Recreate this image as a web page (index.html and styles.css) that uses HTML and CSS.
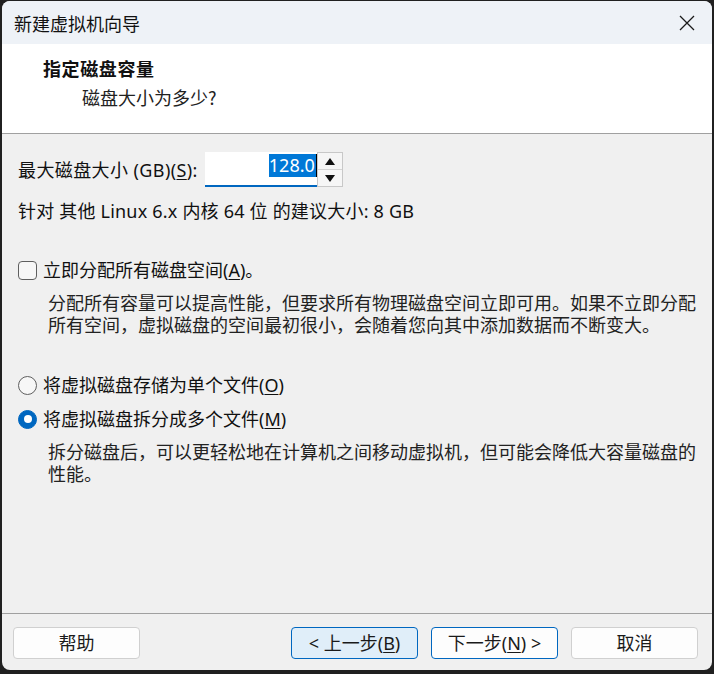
FILE: index.html
```html
<!DOCTYPE html>
<html lang="zh-CN">
<head>
<meta charset="utf-8">
<title>新建虚拟机向导</title>
<link rel="stylesheet" href="styles.css">
</head>
<body>
<div class="window">
  <div class="titlebar">
    <span class="title">新建虚拟机向导</span>
    <span class="close">
      <svg width="16" height="16" viewBox="0 0 16 16"><path d="M1 1 L15 15 M15 1 L1 15" stroke="#1a1a1a" stroke-width="1.3" fill="none"/></svg>
    </span>
  </div>
  <div class="header">
    <div class="h-title">指定磁盘容量</div>
    <div class="h-sub">磁盘大小为多少?</div>
  </div>
  <div class="content">
    <div class="size-row">
      <span class="label">最大磁盘大小 (GB)(<u>S</u>):</span>
      <div class="spin">
        <div class="spin-input"><span class="sel">128.0</span></div>
        <div class="spin-btns">
          <span class="spin-btn"><svg width="10" height="7" viewBox="0 0 10 7"><path d="M0 7 L5 0 L10 7 Z" fill="#111"/></svg></span>
          <span class="spin-btn"><svg width="10" height="7" viewBox="0 0 10 7"><path d="M0 0 L10 0 L5 7 Z" fill="#111"/></svg></span>
        </div>
      </div>
    </div>
    <div class="hint">针对 其他 Linux 6.x 内核 64 位 的建议大小: 8 GB</div>

    <div class="opt opt-check">
      <span class="checkbox"></span>
      <span class="label">立即分配所有磁盘空间(<u>A</u>)。</span>
    </div>
    <p class="desc">分配所有容量可以提高性能，但要求所有物理磁盘空间立即可用。如果不立即分配<br>所有空间，虚拟磁盘的空间最初很小，会随着您向其中添加数据而不断变大。</p>

    <div class="opt opt-radio1">
      <span class="radio"></span>
      <span class="label">将虚拟磁盘存储为单个文件(<u>O</u>)</span>
    </div>
    <div class="opt opt-radio2">
      <span class="radio checked"></span>
      <span class="label">将虚拟磁盘拆分成多个文件(<u>M</u>)</span>
    </div>
    <p class="desc">拆分磁盘后，可以更轻松地在计算机之间移动虚拟机，但可能会降低大容量磁盘的<br>性能。</p>
  </div>
  <div class="footer">
    <button class="btn">帮助</button>
    <span class="spacer"></span>
    <button class="btn btn-back">&lt; 上一步(<u>B</u>)</button>
    <button class="btn btn-next">下一步(<u>N</u>) &gt;</button>
    <button class="btn">取消</button>
  </div>
</div>
</body>
</html>
```

FILE: styles.css
```css
* { box-sizing: border-box; }
html, body { margin: 0; padding: 0; }
body {
  background: #202020;
  width: 714px;
  height: 674px;
  overflow: hidden;
  font-family: "Noto Sans", "Noto Sans CJK SC", sans-serif;
  font-size: 18px;
  color: #111;
}
.window {
  margin: 1px 0 0 2px;
  width: 710px;
  height: 669px;
  border-radius: 8px;
  overflow: hidden;
  background: #f0f0f0;
  display: flex;
  flex-direction: column;
}
.titlebar {
  height: 43px;
  background: #eef2f7;
  display: flex;
  align-items: center;
  justify-content: space-between;
  padding: 0 17px 0 12px;
}
.title {
  font-family: "Noto Sans CJK SC", sans-serif;
  font-size: 18px;
  line-height: 24px;
  color: #111;
}
.close { display: flex; width: 16px; height: 16px; }
.header {
  background: #ffffff;
  padding: 12px 0 24px 41px;
  border-bottom: 1px solid #a0a0a0;
}
.h-title {
  font-family: "Noto Sans CJK SC", sans-serif;
  font-weight: bold;
  font-size: 18px;
  line-height: 24px;
  letter-spacing: 0.6px;
}
.h-sub {
  font-family: "Noto Sans CJK SC", sans-serif;
  font-size: 18px;
  line-height: 24px;
  margin: 5px 0 0 39px;
  color: #222;
}
.content {
  flex: 1;
  padding: 0 16px;
}
.label { line-height: 24px; }
u { text-underline-offset: 2px; }
.size-row {
  margin-top: 18px;
  height: 35px;
  display: flex;
  align-items: center;
}
.size-row .label { margin-right: 7px; letter-spacing: 0.4px; }
.spin { display: flex; height: 35px; }
.spin-input {
  width: 112px;
  height: 35px;
  background: #fff;
  border-bottom: 2px solid #0067c0;
  display: flex;
  justify-content: flex-end;
  align-items: flex-start;
  padding-top: 2px;
}
.sel {
  background: #0078d7;
  color: #fff;
  line-height: 23px;
  padding: 0 1px 0 0;
  border-right: 1px solid #000;
}
.spin-btns {
  width: 26px;
  display: flex;
  flex-direction: column;
  border: 1px solid #c8c8c8;
  background: #f6f6f6;
}
.spin-btn {
  flex: 1;
  display: flex;
  align-items: center;
  justify-content: center;
}
.spin-btn + .spin-btn { border-top: 1px solid #d4d4d4; }
.hint { margin-top: 12px; line-height: 24px; letter-spacing: 0.2px; }
.opt {
  display: flex;
  align-items: center;
  height: 24px;
}
.opt .label { margin-left: 6px; }
.opt-check { margin-top: 35px; }
.opt-radio1 { margin-top: 37px; }
.opt-radio2 { margin-top: 10px; }
.checkbox {
  width: 19px;
  height: 19px;
  border: 1px solid #5f5f5f;
  border-radius: 4px;
  background: #f7f7f7;
}
.radio {
  width: 19px;
  height: 19px;
  border: 1px solid #5f5f5f;
  border-radius: 50%;
  background: #f7f7f7;
  display: flex;
  align-items: center;
  justify-content: center;
}
.radio.checked {
  border-color: #0067c0;
  background: #0067c0;
}
.radio.checked::after {
  content: "";
  width: 8px;
  height: 8px;
  border-radius: 50%;
  background: #fff;
}
.desc {
  margin: 10px 0 0 30px;
  line-height: 22px;
  letter-spacing: 0;
  white-space: nowrap;
  color: #222;
}
.footer {
  border-top: 1px solid #a0a0a0;
  padding: 13px 14px 11px 11px;
  display: flex;
  gap: 13px;
}
.spacer { flex: 1; }
.btn {
  width: 127px;
  height: 32px;
  border: 1px solid #d0d0d0;
  border-radius: 4px;
  background: #fdfdfd;
  font-family: "Noto Sans", "Noto Sans CJK SC", sans-serif;
  font-size: 18px;
  color: #1a1a1a;
  padding: 0;
  display: flex;
  align-items: center;
  justify-content: center;
  line-height: 24px;
}
.btn-back {
  background: #e0eef9;
  border-color: #0067c0;
}
.btn-next {
  border-color: #0067c0;
}
```
